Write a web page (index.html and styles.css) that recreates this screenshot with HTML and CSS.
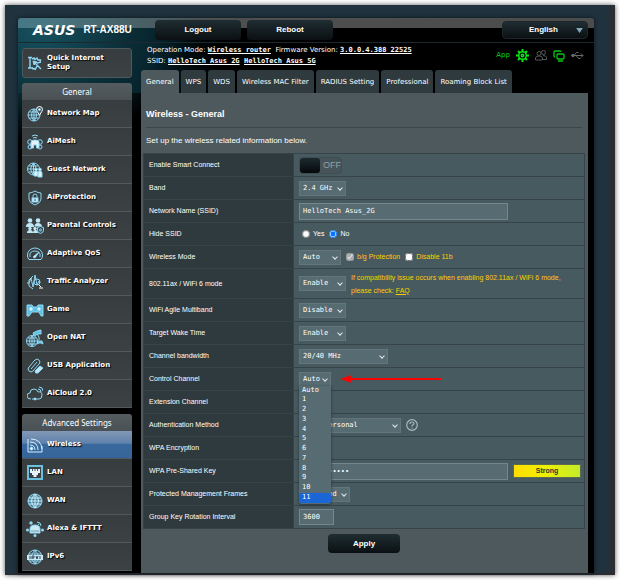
FILE: index.html
```html
<!DOCTYPE html>
<html lang="en">
<head>
<meta charset="utf-8">
<title>RT-AX88U - Wireless</title>
<link rel="stylesheet" href="styles.css">
</head>
<body>
<div class="frame">
<div class="shell">
  <header class="topbar">
    <div class="brand"><span class="logo">ASUS</span><span class="model">RT-AX88U</span></div>
    <div class="top-actions">
      <button class="dark-btn" type="button">Logout</button>
      <button class="dark-btn" type="button">Reboot</button>
      <button class="dark-btn lang" type="button">English<svg viewBox="0 0 8 6"><path d="M0 0h8L4 6z" fill="#7fa9bd"/></svg></button>
    </div>
  </header>
  <div class="columns">
    <nav class="side">
      <a class="quick" href="#">
        <svg class="ico" viewBox="0 0 16 16"><path d="M1 2.500h4M3 2.500V13M1 13h4M5 4l2-1 1 1.500 2-1.500 1 2 2.500 0-.5 2.500M5 12l1 2 2-.5M7 7l7 7M10 8l4-1M10 11l-2 4" stroke-width="1.400"/><path d="M6 6l4 1-3 3z" fill="#8fd8f5"/></svg>
        <span>Quick Internet<br>Setup</span></a>
      <section class="menu">
        <h2>General</h2>
        <a href="#"><svg class="ico" viewBox="0 0 16 16"><circle cx="7" cy="9" r="6"/><path d="M1 9h12M2 6h8M2 12h10M7 3v12M7 3Q2 9 7 15M7 3q5 6 0 12"/><path d="M12.500 9Q9.500 5 9.500 3.500a3 3 0 0 1 6 0Q15.500 5 12.500 9z" fill="#3d5560" stroke="#fff"/><circle cx="12.500" cy="3.500" r="1" fill="#fff"/></svg>Network Map</a>
        <a href="#"><svg class="ico" viewBox="0 0 16 16"><path d="M5 2q3-2 6 0M6 4q2-1 4 0"/><circle cx="3" cy="8" r="2.300"/><circle cx="13" cy="8" r="2.300"/><circle cx="3" cy="13" r="2"/><circle cx="13" cy="13" r="2"/><path d="M4 14V8q0-2 4-2t4 2v6h-2.500v-3h-3v3z" fill="#e3f2f8"/></svg>AiMesh</a>
        <a href="#"><svg class="ico" viewBox="0 0 16 16"><circle cx="6.500" cy="7" r="6"/><path d="M1 7h12M2 4h9M2 10h9M6.500 1v12M6.500 1Q1 7 6.500 13M6.500 1q5 6 0 12"/><path d="M7 14v-3q0-2 2-2t2 2v3zM11 15v-4q0-2 2-2t2 2v4z" fill="#e3f2f8"/><circle cx="9" cy="7.500" r="1.300" fill="#e3f2f8"/><circle cx="13" cy="7.500" r="1.300" fill="#e3f2f8"/></svg>Guest Network</a>
        <a href="#"><svg class="ico" viewBox="0 0 16 16"><path d="M8 1q3 2 6 2v6q0 4-6 6-6-2-6-6V3q3 0 6-2z"/><path d="M6 8V6q0-2 2-2t2 2v2"/><rect x="5" y="8" width="6" height="4" fill="#c9ecf8"/><path d="M8 9v2" stroke="#345"/></svg>AiProtection</a>
        <a href="#"><svg class="ico wide" viewBox="0 0 18 16"><g fill="#bfe8f7" stroke="none"><circle cx="4" cy="2.500" r="2.300"/><path d="M0 9q0-4 4-4t4 4z"/><circle cx="12" cy="2.500" r="2.300"/><path d="M8.500 8.500q0-3.500 3.500-3.500t4 3.500z"/><circle cx="4" cy="10.500" r="1.700"/><path d="M1 15q0-3 3-3t3 3z"/><circle cx="9" cy="10.500" r="1.700"/><path d="M7 15q0-3 2.500-3t2.500 3z"/></g><path d="M14.500 8.500l3 1v3q0 2-3 3-3-1-3-3v-3z" fill="#34505c"/><circle cx="14.500" cy="12" r="1"/></svg>Parental Controls</a>
        <a href="#"><svg class="ico" viewBox="0 0 16 16"><path d="M2 13.500Q0 11 .5 9a7.500 7 0 0 1 15 0q.5 2-1.500 4.500zM3 11Q2 5 8 5t5 6"/><path d="M6 11l6-5-4 6z" fill="#e3f2f8"/></svg>Adaptive QoS</a>
        <a href="#"><svg class="ico" viewBox="0 0 16 16"><path d="M0 9h2l2-5 2 9 2-12 2 10 2-4 1 2M6 2L2 6v6l4 3"/><circle cx="10" cy="8" r="3"/><path d="M12 11l2 2M12 14h4" stroke="#fff"/></svg>Traffic Analyzer</a>
        <a href="#"><svg class="ico wide" viewBox="0 0 18 16"><path d="M1 3h5l1 2h4l1-2h5v11h-2l-2-4H6l-3 4H1z" fill="#5fc1e4"/><path d="M5 5v4M3 7h4" stroke="#fff"/><circle cx="13" cy="7" r="1.500" fill="#fff"/></svg>Game</a>
        <a href="#"><svg class="ico wide" viewBox="0 0 18 18"><circle cx="6" cy="12" r="5.500"/><path d="M1 12h10M2 9h8M2 15h8M6 6.500v11M6 7q-5 5 0 10M6 7q5 5 0 10"/><path d="M7 4l4-2 4-1 0 4-3 0-4 2zM12 12h4l1 3-2-1h-2l-2 1z" fill="#5fc1e4"/><path d="M11 5l2 3 0 3"/></svg>Open NAT</a>
        <a href="#"><svg class="ico" viewBox="0 0 16 16"><path d="M2 13q-2-2 0-4l6-7q2-2 4 0t0 4l-6 7q-2 2-4 0zM4 11l6-7"/><path d="M8 13l5-5 3 2-5 5q-3 1-3-2z" fill="#b9e5f5"/></svg>USB Application</a>
        <a href="#"><svg class="ico" viewBox="0 0 16 16"><path d="M4 13q-4 0-4-3t3-3q0-4 4-4 3 0 4 3 4-1 4 3 0 4-3 4H9M7 13H5M11 3q3 0 3 3M12 1q4 0 4 4"/><circle cx="8" cy="13" r="1" fill="#fff"/></svg>AiCloud 2.0</a>
      </section>
      <section class="menu">
        <h2>Advanced Settings</h2>
        <a class="active" href="#"><svg class="ico" viewBox="0 0 16 16"><path d="M1 2v13h14V9M3 5q8 0 8 8M3 8q5 0 5 5M4 2q10 0 11 10" stroke="#d5f0ff"/><circle cx="4.500" cy="11.500" r="1.500" fill="#fff"/></svg>Wireless</a>
        <a href="#"><svg class="ico" viewBox="0 0 16 16"><rect x="1" y="1" width="14" height="13" stroke-width="2" stroke="#69bfe0"/><path d="M3 4h10v4h-2v2H9.500v2h-3v-2H5V8H3z" fill="#e7f3f7" stroke="none"/><path d="M5.500 4v2M8 4v2M10.500 4v2" stroke="#456"/></svg>LAN</a>
        <a href="#"><svg class="ico" viewBox="0 0 16 16"><circle cx="8" cy="8" r="7" fill="#3f7d9b"/><path d="M1 8h14M2 5h12M2 11h12M8 1v14M8 1Q1 8 8 15M8 1q7 7 0 14" stroke="#d4f1fb"/></svg>WAN</a>
        <a href="#"><svg class="ico wide" viewBox="0 0 18 16"><path d="M4 12V8q0-4 5-4t5 4v4z" fill="#c6e9f5"/><path d="M5 10h8" stroke="#79a"/><g fill="#8fd8f5" stroke="none"><circle cx="5" cy="2" r="1.700"/><circle cx="1.500" cy="9" r="1.500"/><circle cx="16.500" cy="9" r="1.500"/><circle cx="9" cy="14.500" r="1.500"/></g><path d="M11 1q4 0 4 4M12 3q1 0 1 1"/></svg>Alexa &amp; IFTTT</a>
        <a href="#"><svg class="ico" viewBox="0 0 16 16"><circle cx="8" cy="8" r="7"/><path d="M2 5h12M2 12h12M8 1v14M8 1Q1 8 8 15M8 1q7 7 0 14"/><path d="M0 6h16v5H0z" fill="#c6e9f5" stroke="none"/><path d="M3 7v3M5 10V7h2v2H5M9 7l1 3 1-3M13 7v3" stroke="#345"/></svg>IPv6</a>
      </section>
    </nav>
    <main class="main">
      <div class="status">
        <p>Operation Mode: <a href="#">Wireless router</a>&nbsp; Firmware Version: <a href="#">3.0.0.4.388_22525</a><br>
        SSID: <a href="#">HelloTech Asus_2G</a>&nbsp; <a href="#">HelloTech Asus_5G</a></p>
        <div class="tray">
          <span class="app">App</span>
          <svg width="13" height="13" viewBox="0 0 13 13" fill="none" stroke="#0be516" stroke-width="1.500"><circle cx="6.500" cy="6.500" r="3.800"/><circle cx="6.500" cy="6.500" r="1.200"/><path d="M6.500 0v3M6.500 10v3M0 6.500h3M10 6.500h3M2 2l2 2M9 9l2 2M2 11l2-2M9 4l2-2" stroke-width="2"/></svg>
          <svg width="12" height="11" viewBox="0 0 12 11" fill="none" stroke="#55595b"><circle cx="4" cy="3.500" r="2"/><circle cx="8.500" cy="2.500" r="2"/><path d="M.5 10V8q0-2 3.500-2t3.500 2v2zM8 5.500q3.500 0 3.500 2v2H8"/></svg>
          <svg width="12" height="12" viewBox="0 0 12 12" fill="none" stroke="#0bc516" stroke-width="1.300"><path d="M2 7Q1 7 1 6V2q0-1 1-1h5q1 0 1 1M5 4h5q1 0 1 1v3q0 1-1 1H5Q4 9 4 8V5q0-1 1-1zM5 11h5"/></svg>
          <svg width="13" height="9" viewBox="0 0 13 9" fill="none" stroke="#666a6c"><path d="M0 4.500h12M10 2.500l2 2-2 2M3 4.500l2.500-3h2M5 4.500l2.500 3h2"/><circle cx="2" cy="4.500" r="1.300" fill="#666a6c"/></svg>
        </div>
      </div>
      <div class="tabs">
        <a class="on" href="#">General</a><a href="#">WPS</a><a href="#">WDS</a><a href="#">Wireless MAC Filter</a><a href="#">RADIUS Setting</a><a href="#">Professional</a><a href="#">Roaming Block List</a>
      </div>
      <form class="panel">
        <h1>Wireless - General</h1>
        <p class="intro">Set up the wireless related information below.</p>
        <table>
          <tr><th scope="row"><label for="smart">Enable Smart Connect</label></th><td><div class="line"><label class="switch"><input type="checkbox" id="smart"><span class="knob"></span><span class="off">OFF</span></label></div></td></tr>
          <tr><th scope="row"><label for="band">Band</label></th><td><div class="line"><span class="sel w47"><select id="band"><option>2.4 GHz</option></select></span></div></td></tr>
          <tr><th scope="row"><label for="ssid">Network Name (SSID)</label></th><td><div class="line"><input class="text" id="ssid" type="text" value="HelloTech Asus_2G"></div></td></tr>
          <tr><th scope="row">Hide SSID</th><td><div class="line radios"><label><input type="radio" name="hide">Yes</label><label><input type="radio" name="hide" checked>No</label></div></td></tr>
          <tr><th scope="row"><label for="mode">Wireless Mode</label></th><td><div class="line warn"><span class="sel w42"><select id="mode"><option>Auto</option></select></span><label><input type="checkbox" checked disabled>b/g Protection</label><label><input type="checkbox">Disable 11b</label></div></td></tr>
          <tr class="tall"><th scope="row"><label for="ax">802.11ax / WiFi 6 mode</label></th><td><div class="line warn"><span class="sel w47"><select id="ax"><option>Enable</option></select></span><p>If compatibility issue occurs when enabling 802.11ax / WiFi 6 mode,<br>please check: <a href="#">FAQ</a></p></div></td></tr>
          <tr><th scope="row"><label for="agile">WiFi Agile Multiband</label></th><td><div class="line"><span class="sel w47"><select id="agile"><option>Disable</option></select></span></div></td></tr>
          <tr><th scope="row"><label for="twt">Target Wake Time</label></th><td><div class="line"><span class="sel w47"><select id="twt"><option>Enable</option></select></span></div></td></tr>
          <tr><th scope="row"><label for="bw">Channel bandwidth</label></th><td><div class="line"><span class="sel w89"><select id="bw"><option>20/40 MHz</option></select></span></div></td></tr>
          <tr><th scope="row"><label for="chan">Control Channel</label></th><td><div class="line channel"><span class="sel w32"><select id="chan"><option>Auto</option></select></span>
            <ul class="options"><li>Auto</li><li>1</li><li>2</li><li>3</li><li>4</li><li>5</li><li>6</li><li>7</li><li>8</li><li>9</li><li>10</li><li class="picked">11</li></ul>
            <svg class="arrow" width="101" height="8" viewBox="0 0 101 8"><path d="M10 3h91v2H10z" fill="#f00"/><path d="M0 4l12-4-2 4 2 4z" fill="#f00"/></svg></div></td></tr>
          <tr><th scope="row">Extension Channel</th><td></td></tr>
          <tr><th scope="row"><label for="auth">Authentication Method</label></th><td><div class="line"><span class="sel w102"><select id="auth"><option>WPA2-Personal</option></select></span><svg width="12" height="12" viewBox="0 0 12 12" fill="none" stroke="#a9b8bc" stroke-width="1.200"><circle cx="6" cy="6" r="5.300"/><path d="M4 5q0-2 2-2t2 1.500Q8 5.500 6 6.500v1M6 8.500v1"/></svg></div></td></tr>
          <tr><th scope="row">WPA Encryption</th><td></td></tr>
          <tr><th scope="row"><label for="psk">WPA Pre-Shared Key</label></th><td><div class="line"><input class="text key" id="psk" type="password" value="password123"><span class="strong">Strong</span></div></td></tr>
          <tr><th scope="row"><label for="pmf">Protected Management Frames</label></th><td><div class="line"><span class="sel w51"><select id="pmf"><option>Disabled</option></select></span></div></td></tr>
          <tr><th scope="row"><label for="rekey">Group Key Rotation Interval</label></th><td><div class="line"><input class="text short" id="rekey" type="text" value="3600"></div></td></tr>
        </table>
        <button class="dark-btn apply" type="button">Apply</button>
      </form>
    </main>
  </div>
</div>
</div>
</body>
</html>
```
FILE: styles.css
```css
* { box-sizing: border-box; }
body {
  margin: 0;
  min-height: 100vh;
  padding: 5px;
  display: flex;
  background: #fff;
  color: #fff;
  font: 7px/10px "Liberation Sans", Arial, sans-serif;
}
a { color: inherit; text-decoration: none; }
h1, h2, p, ul { margin: 0; padding: 0; }

.frame {
  flex: 1;
  display: flex;
  padding: 13px 16px 0 13px;
  border-right: 5px solid #2c2c33;
  border-bottom: 2px solid #2c2c33;
  background: #20323e;
  box-shadow: 0 0 5px #555;
}
.shell {
  flex: 1;
  min-width: 0;
  display: flex;
  flex-direction: column;
  border-radius: 3px 3px 0 0;
  background:
    linear-gradient(90deg, rgba(120, 165, 178, .5), rgba(105, 105, 105, .75) 40%, rgba(95, 95, 95, .8)) 0 0 / 100% 10px no-repeat,
    radial-gradient(ellipse 150px 115px at 22px 10px, #17515f, rgba(12, 48, 58, .8) 60%, rgba(0, 0, 0, 0)),
    linear-gradient(90deg, #08303b, #041d25 130px, #000 200px) 0 0 / 100% 75px no-repeat,
    #000;
  box-shadow: 0 0 4px #0b161c;
}

/* header */
.topbar {
  height: 25px;
  display: flex;
  border-bottom: 1px solid #1c2a30;
}
.brand {
  flex: 0 0 137px;
  display: flex;
  align-items: center;
  gap: 8px;
  padding-left: 15px;
}
.logo { font: italic bold 14px/14px "DejaVu Sans", sans-serif; }
.model { font-size: 10px; font-weight: bold; }
.top-actions {
  flex: 1;
  display: flex;
  align-items: center;
  gap: 6px;
  padding-right: 6px;
}
.dark-btn {
  width: 86px;
  height: 20px;
  padding: 0;
  border: 0;
  border-radius: 4px;
  background: linear-gradient(#1f2d32, #0b1012);
  color: #fff;
  font: bold 8px/10px "Liberation Sans", Arial, sans-serif;
}
.lang {
  height: 18px;
  margin-left: auto;
  padding: 0 4px 0 26px;
  display: flex;
  align-items: center;
  justify-content: space-between;
  border: 1px solid #1c272c;
}
.lang svg { width: 7px; height: 5px; }

/* sidebar */
.columns { flex: 1; display: flex; }
.side {
  flex: 0 0 110px;
  margin: 5px 9px 0 4px;
  font: bold 7px/9px "DejaVu Sans", Verdana, sans-serif;
  text-shadow: 1px 1px 1px #000;
}
.side a {
  display: flex;
  align-items: center;
  gap: 4px;
  height: 28px;
  padding-left: 5px;
  border-bottom: 1px solid #51595b;
  background: linear-gradient(#373d3f, #3c4143);
}
.side a.quick {
  height: 30px;
  margin-bottom: 5px;
  padding-left: 4px;
  border: 1px solid #4d595d;
  border-radius: 3px;
}
.ico {
  flex: none;
  width: 16px;
  height: 16px;
  fill: none;
  stroke: #8fd8f5;
}
.ico.wide { width: 18px; height: 18px; margin: 0 -1px; }
.menu + .menu { margin-top: 6px; }
.menu h2 {
  height: 17px;
  border-radius: 3px 3px 0 0;
  background: linear-gradient(#545c5f, #495155);
  font: 8px/18px "Noto Sans", Verdana, sans-serif;
  text-align: center;
  text-shadow: none;
}
.side a.active { background: linear-gradient(#8298b5, #5f82ac 45%, #39689c 50%, #35659a); }

/* status line and tabs */
.main {
  flex: 1;
  min-width: 0;
  margin-right: 6px;
  display: flex;
  flex-direction: column;
}
.status {
  height: 27px;
  display: flex;
  justify-content: space-between;
  align-items: center;
  padding: 0 4px 2px 6px;
  font: 7px/11px "DejaVu Sans", Verdana, sans-serif;
  white-space: nowrap;
}
.status a {
  font-family: "DejaVu Sans Mono", monospace;
  font-weight: bold;
  text-decoration: underline;
}
.tray { display: flex; align-items: center; gap: 6px; }
.app { color: #0bd516; }
.tabs {
  display: flex;
  gap: 2px;
  font: 7px/25px "DejaVu Sans", Verdana, sans-serif;
  white-space: nowrap;
}
.tabs a {
  height: 23px;
  padding: 0 5px;
  border-radius: 3px 3px 0 0;
  background: linear-gradient(#2e3a3e, #303b3f);
}
.tabs a.on { background: #4d595d; }

/* form */
.panel {
  flex: 1;
  padding: 0 3px 0 2px;
  background: #4d595d;
}
.panel h1 {
  margin: 0 3px;
  padding: 14px 0 5px;
  border-bottom: 1px solid #3a474c;
  font-size: 9px;
  line-height: 15px;
}
.intro { padding: 8px 3px 7px; font-size: 8px; }
table {
  width: 100%;
  border-collapse: collapse;
  table-layout: fixed;
}
tr { height: 23px; }
tr.tall { height: 30px; }
th, td {
  padding: 0 5px;
  border: 1px solid #364348;
  text-align: left;
  vertical-align: middle;
}
th { width: 150px; background: #2f3a3e; font-weight: normal; }
td { padding-right: 2px; background: #475a5f; }
.line { display: flex; align-items: center; gap: 5px; }

.sel { position: relative; flex: none; }
.sel::after {
  content: "";
  position: absolute;
  right: 4px;
  top: 5px;
  width: 3px;
  height: 3px;
  border: solid #e4eaec;
  border-width: 0 1px 1px 0;
  transform: rotate(45deg);
}
select, .text {
  display: block;
  width: 100%;
  height: 15px;
  margin: 0;
  padding: 0 3px;
  appearance: none;
  border: 1px solid #64767c;
  border-radius: 0;
  background: #576b72;
  color: #fff;
  font: 7px/9px "DejaVu Sans Mono", monospace;
}
.text { flex: 0 1 209px; height: 17px; border-color: #75868c; }
.text.short { flex-basis: 35px; height: 16px; }
.text.key { font-family: "Liberation Mono", monospace; }
.w32 { width: 32px; }
.w42 { width: 42px; }
.w47 { width: 47px; }
.w51 { width: 51px; }
.w89 { width: 89px; }
.w102 { width: 102px; }

.line label { display: flex; align-items: center; gap: 3px; }
.line label input { width: 8px; height: 8px; margin: 0; }
.radios { gap: 5px; padding-left: 3px; }
.warn { color: #fc0; white-space: nowrap; }
.warn p { line-height: 13px; }
.warn a { text-decoration: underline; }

.line .switch {
  position: relative;
  width: 43px;
  height: 17px;
  border: 1px solid #3f4c51;
  border-radius: 4px;
  background: #46545a;
  color: #93a0a4;
  font-size: 9px;
}
.line .switch input {
  position: absolute;
  inset: 0;
  width: 100%;
  height: 100%;
  opacity: 0;
}
.knob {
  width: 20px;
  height: 15px;
  border-radius: 3px;
  background: linear-gradient(#1d2a2f, #05080a);
}

.channel { position: relative; gap: 9px; }
.options {
  position: absolute;
  z-index: 1;
  left: 0;
  top: 14px;
  width: 32px;
  height: 118px;
  display: grid;
  grid-auto-rows: 1fr;
  padding-bottom: 1px;
  border-radius: 0 0 3px 3px;
  background: #576b72;
  box-shadow: 0 1px 3px #2a3539;
  font: 7px/9px "DejaVu Sans Mono", monospace;
  list-style: none;
}
.options li { padding-left: 3px; }
.options .picked { border-radius: 2px; background: #1a66d6; }

.strong {
  flex: 1;
  height: 14px;
  margin-right: 1px;
  border: 1px solid #5c6b50;
  background: linear-gradient(90deg, #ffdc00, #f0f000 45%, #c3ec2c);
  color: #333;
  font: bold 7px/12px "Liberation Sans", Arial, sans-serif;
  text-align: center;
}
.apply {
  display: block;
  width: 72px;
  height: 19px;
  margin: 5px auto 0;
}
```
